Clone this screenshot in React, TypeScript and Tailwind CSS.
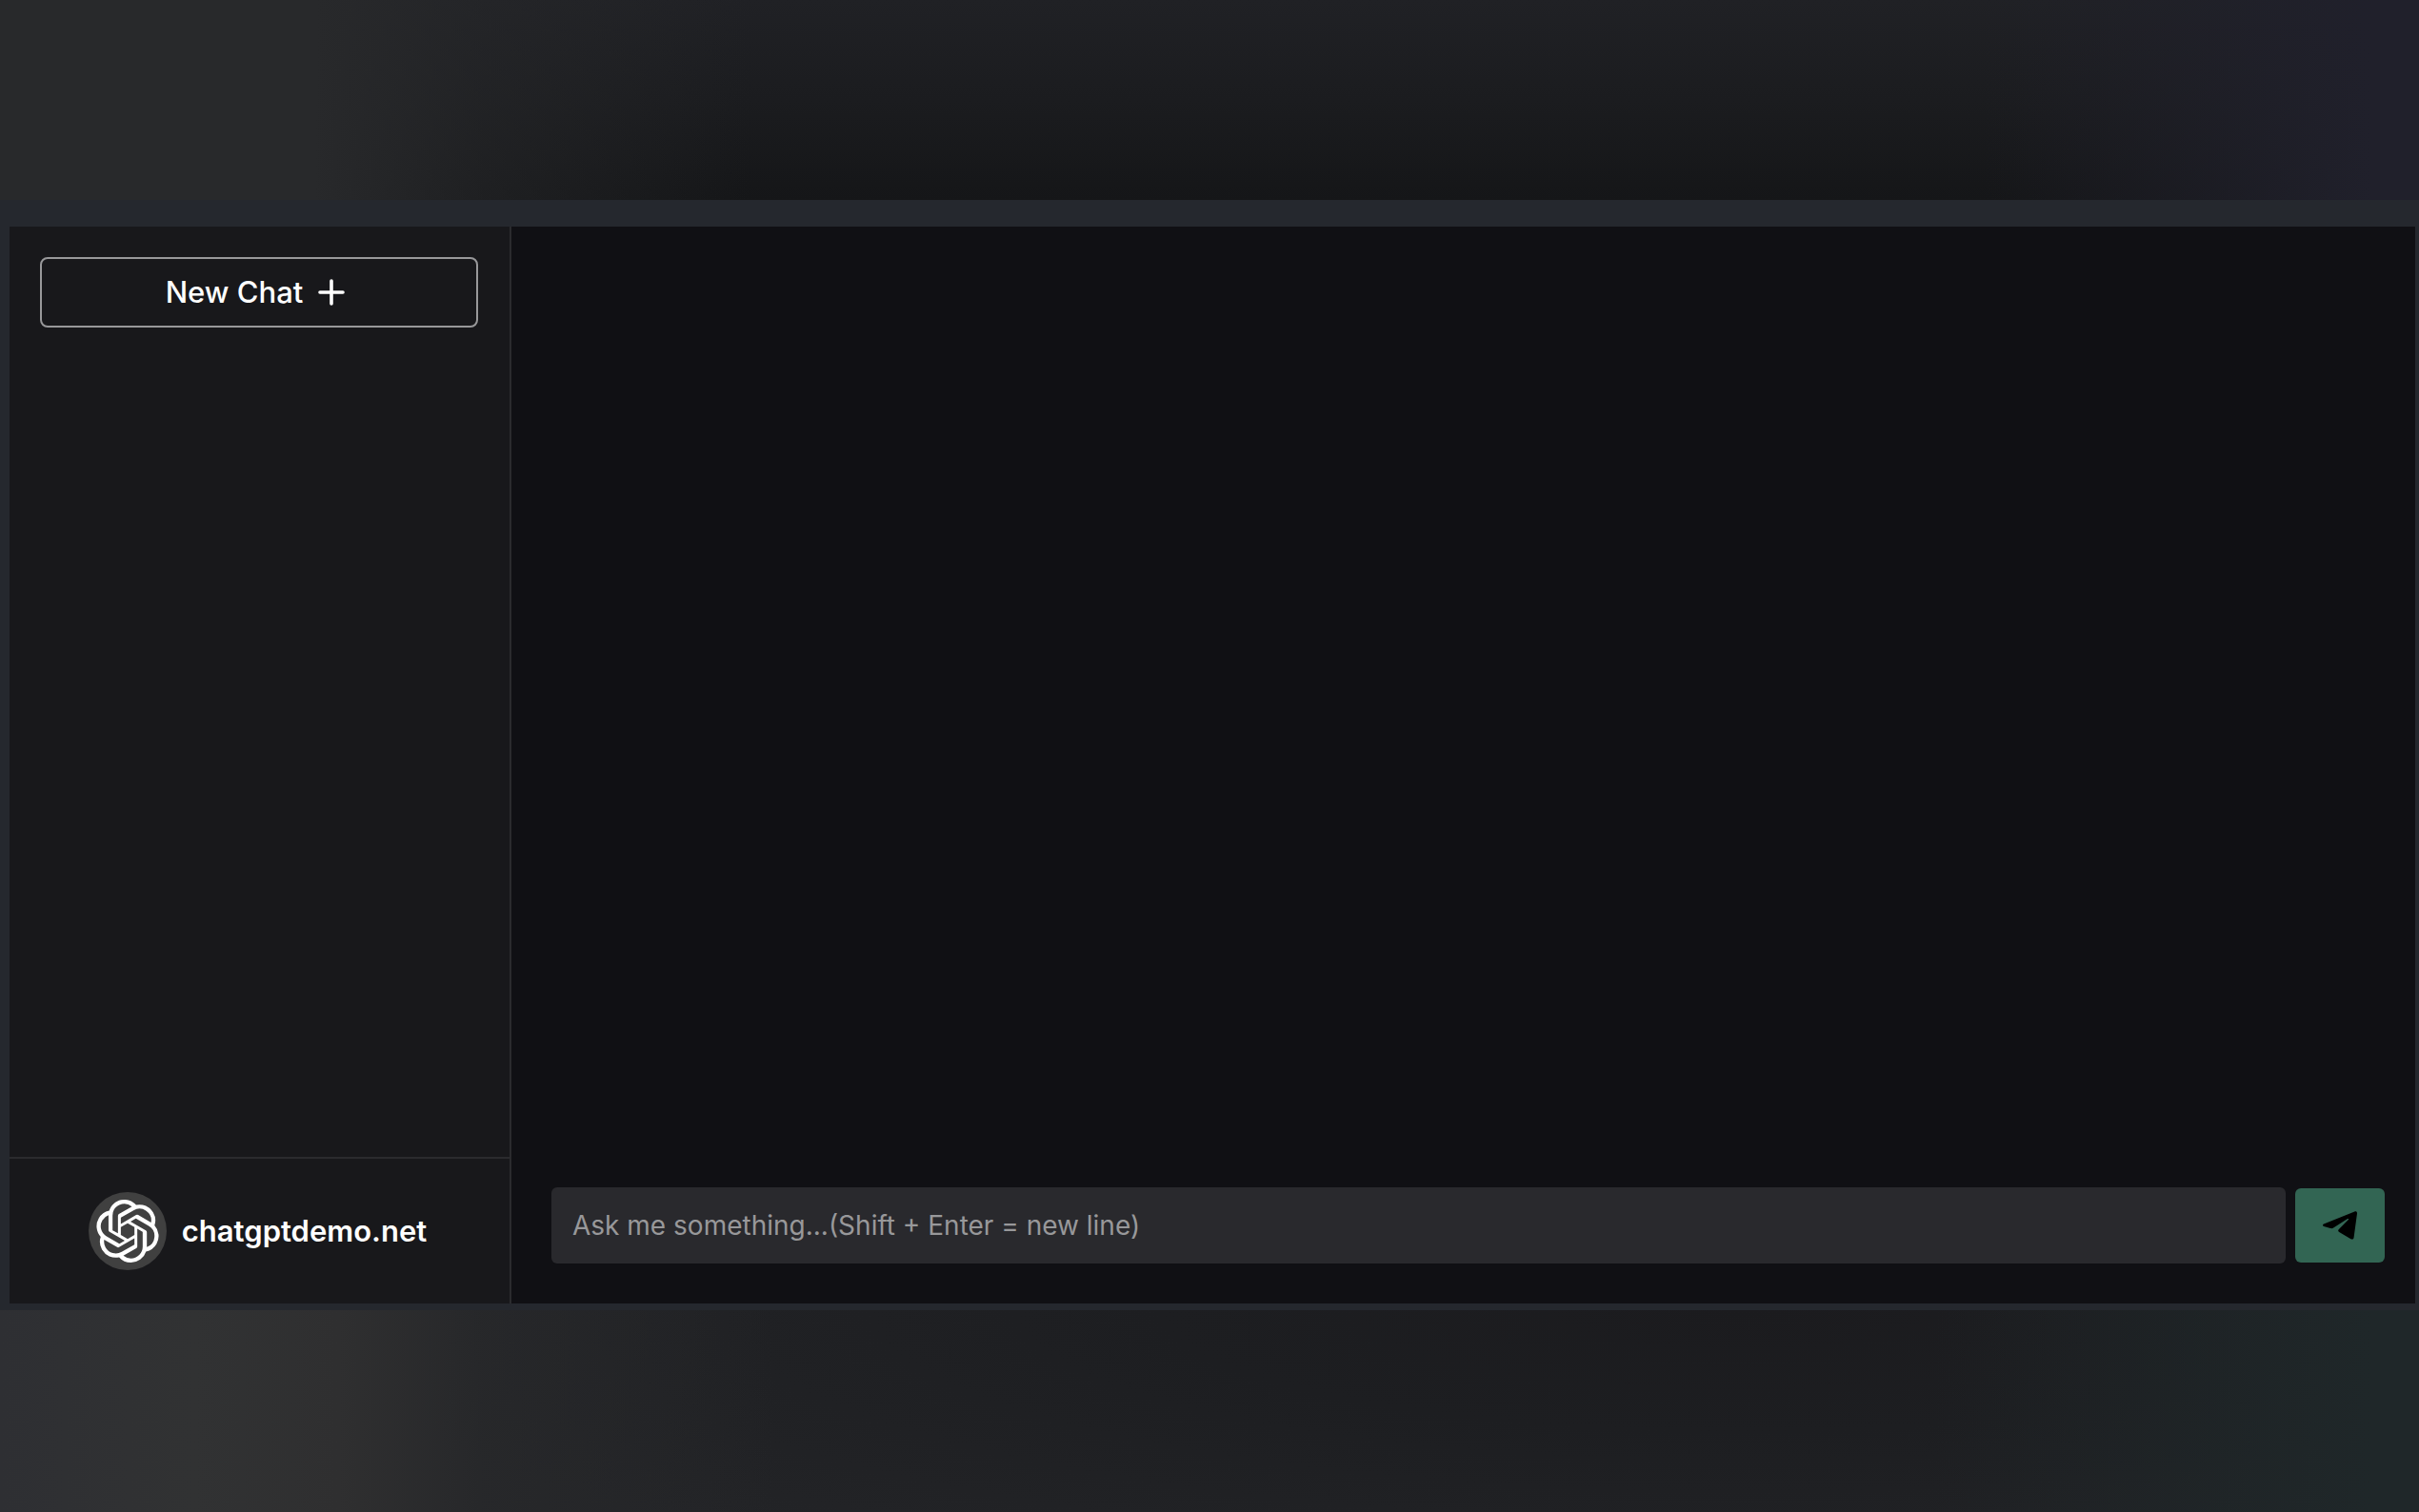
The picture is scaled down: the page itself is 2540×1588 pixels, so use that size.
import {SiOpenai} from "react-icons/si";

const PlusIcon = () => (
    <svg viewBox="0 0 28 28" className="size-7" fill="none" stroke="currentColor" strokeWidth="3.6" strokeLinecap="round" aria-hidden="true">
        <path d="M14 2v24M2 14h24" />
    </svg>
)

const PlaneIcon = () => (
    <svg viewBox="0 0 36 30" className="h-[30px] w-9" fill="currentColor" aria-hidden="true">
        <path d="M1 13.6 33.4.5c1.6-.6 2.7.3 2.6 2L32.6 27.4c-.2 2-1.7 2.7-3.2 1.8L17.2 22c-1.3-.8-1.4-2-.3-3.1L26.6 9.3c1-1.1.2-1.8-1-1L11.2 17.6c-1 .7-2 .8-3.2.5L1 15.9c-1.3-.4-1.4-1.7 0-2.3z" />
    </svg>
)

const Sidebar = () => {
    return (
        <aside className="flex w-[527px] shrink-0 flex-col border-r-2 border-[#2b2b2e] bg-[#18181b]">
            <div className="flex-1 px-8 pt-8">
                <button type="button" className="flex h-[74px] w-[460px] items-center justify-center gap-4 rounded-lg border-2 border-[#98989a] pr-2 text-[31px] font-medium text-white">
                    New Chat
                    <PlusIcon />
                </button>
            </div>

            <div className="flex h-[154px] items-center justify-center gap-4 border-t-2 border-[#2b2b2e] pr-1">
                <div className="flex size-[82px] items-center justify-center rounded-full bg-[#404040]">
                    <SiOpenai className="size-[66px] text-white" />
                </div>
                <a href="#" className="text-[31px] font-semibold text-white">chatgptdemo.net</a>
            </div>
        </aside>
    )
}

const MessageForm = () => {
    return (
        <form className="flex items-center gap-[10px] pr-8 pb-[42px] pl-[42px]">
            <textarea
                rows={1}
                aria-label="Message"
                placeholder="Ask me something...(Shift + Enter = new line)"
                className="h-20 flex-1 resize-none rounded-md bg-[#29292d] px-[22px] py-5 text-[28px] leading-10 text-white outline-none placeholder:text-[#98989a]"
            />
            <button type="button" aria-label="Send" className="flex h-[78px] w-[94px] items-center justify-center rounded-md bg-[#326553] text-black">
                <PlaneIcon />
            </button>
        </form>
    )
}

const App = () => {
    return (
        <div className="flex min-h-screen flex-col bg-[#1c1d20] font-['Inter',sans-serif]">
            <div className="h-[210px] bg-[linear-gradient(90deg,#28292b_0%,#28292b_13%,#28292b80_20%,#28292b00_31%,#20202b00_82%,#20202b_98%),linear-gradient(180deg,#202125_0%,#1b1c1f_50%,#151618_100%)]" />

            <main className="flex flex-1 bg-[#25282e] pt-7 pr-1 pb-[7px] pl-[10px]">
                <Sidebar />
                <section className="flex flex-1 flex-col justify-end bg-[#101014]">
                    <MessageForm />
                </section>
            </main>

            <div className="h-[212px] bg-[linear-gradient(90deg,#2e2f33_0%,#313233_8%,#2f2f30_14%,#28292bc0_20%,#28292b00_32%,#1f272900_80%,#1f2729_98%),radial-gradient(ellipse_60%_150%_at_72%_0%,#1b1b1e_0%,#1d1e21_40%,#232427_100%)]" />
        </div>
    )
}
export default App
